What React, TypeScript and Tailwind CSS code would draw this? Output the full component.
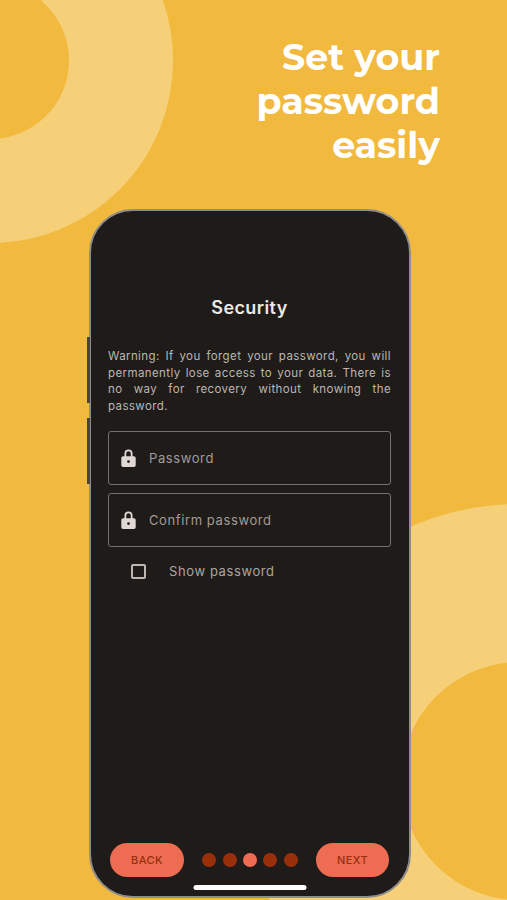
function Field({ label }: { label: string }) {
  return (
    <div className="flex h-[54px] items-center rounded-[3px] border border-[#75716d] pl-[12px]">
      <svg viewBox="0 0 16 20" className="h-[18px] w-[15px] fill-[#e0d8d5]">
        <path
          fillRule="evenodd"
          d="M3.5 8V5a4.5 4.5 0 0 1 9 0v3h1.5a2 2 0 0 1 2 2v8a2 2 0 0 1-2 2H2a2 2 0 0 1-2-2v-8a2 2 0 0 1 2-2h1.5Zm2 0h5V5a2.5 2.5 0 0 0-5 0v3Zm2.5 4.4a1.6 1.6 0 1 0 0 3.2 1.6 1.6 0 0 0 0-3.2Z"
        />
      </svg>
      <span className="ml-[13px] pt-[1px] text-[13px] tracking-[0.6px] text-[#a09c98]">{label}</span>
    </div>
  );
}

function Dot({ active }: { active?: boolean }) {
  return <div className={`h-[14px] w-[14px] rounded-full ${active ? "bg-[#ee6c52]" : "bg-[#9a2f0c]"}`} />;
}

export default function App() {
  return (
    <div className="relative h-[900px] w-[507px] overflow-hidden bg-[#f2b93f] font-['Inter',sans-serif]">
      {/* background rings */}
      <div className="absolute left-[-192px] top-[-122px] h-[365px] w-[365px] rounded-full border-[104px] border-[#f6d078]" />
      <div className="absolute left-[243px] top-[504px] h-[554px] w-[554px] rounded-full border-[158px] border-[#f6d078]" />

      <div className="relative flex h-full flex-col">
        <h1 className="w-full pr-[67px] pt-[35px] text-right font-['Montserrat','Open_Sans',sans-serif] text-[36.4px] font-bold leading-[44px] text-white">
          Set your
          <br />
          password
          <br />
          easily
        </h1>

        <div className="relative ml-[89px] mt-[42px] h-[689px] w-[322px] rounded-[44px] border-2 border-[#8e8c8c] bg-[#1f1b19]">
          {/* side buttons */}
          <div className="absolute left-[-4px] top-[126px] h-[66px] w-[3px] bg-[#46423f]" />
          <div className="absolute left-[-4px] top-[207px] h-[66px] w-[3px] bg-[#46423f]" />

          <div className="flex h-full flex-col pl-[17px] pr-[18px]">
            <h2 className="mt-[85px] text-center text-[18px] font-semibold leading-[24px] tracking-[0.4px] text-[#ece8e5]">
              Security
            </h2>
            <p className="mt-[28px] text-justify text-[11.5px] leading-[16.7px] tracking-[0.4px] text-[#bcb7b3]">
              Warning: If you forget your password, you will permanently lose access to your data. There is no way for
              recovery without knowing the password.
            </p>
            <div className="mt-[16px] flex flex-col gap-[8px]">
              <Field label="Password" />
              <Field label="Confirm password" />
            </div>
            <div className="ml-[23px] mt-[15px] flex items-center">
              <div className="-mt-[1px] h-[15px] w-[15px] rounded-[2px] border-2 border-[#bcb7b3]" />
              <span className="ml-[23px] text-[13px] tracking-[0.6px] text-[#aaa6a2]">Show password</span>
            </div>

            <div className="mt-auto flex items-center justify-between pb-[19px] pl-[2px] pr-[2px]">
              <button className="h-[34px] w-[74px] rounded-full bg-[#ee6c52] text-[11px] font-medium tracking-[0.4px] text-[#9a2f0c]">
                BACK
              </button>
              <div className="flex gap-[6.4px]">
                <Dot />
                <Dot />
                <Dot active />
                <Dot />
                <Dot />
              </div>
              <button className="h-[34px] w-[73px] rounded-full bg-[#ee6c52] text-[11px] font-medium tracking-[0.4px] text-[#9a2f0c]">
                NEXT
              </button>
            </div>
          </div>

          {/* home indicator */}
          <div className="absolute bottom-[6px] left-1/2 h-[5px] w-[113px] -translate-x-1/2 rounded-full bg-white" />
        </div>
      </div>
    </div>
  );
}
